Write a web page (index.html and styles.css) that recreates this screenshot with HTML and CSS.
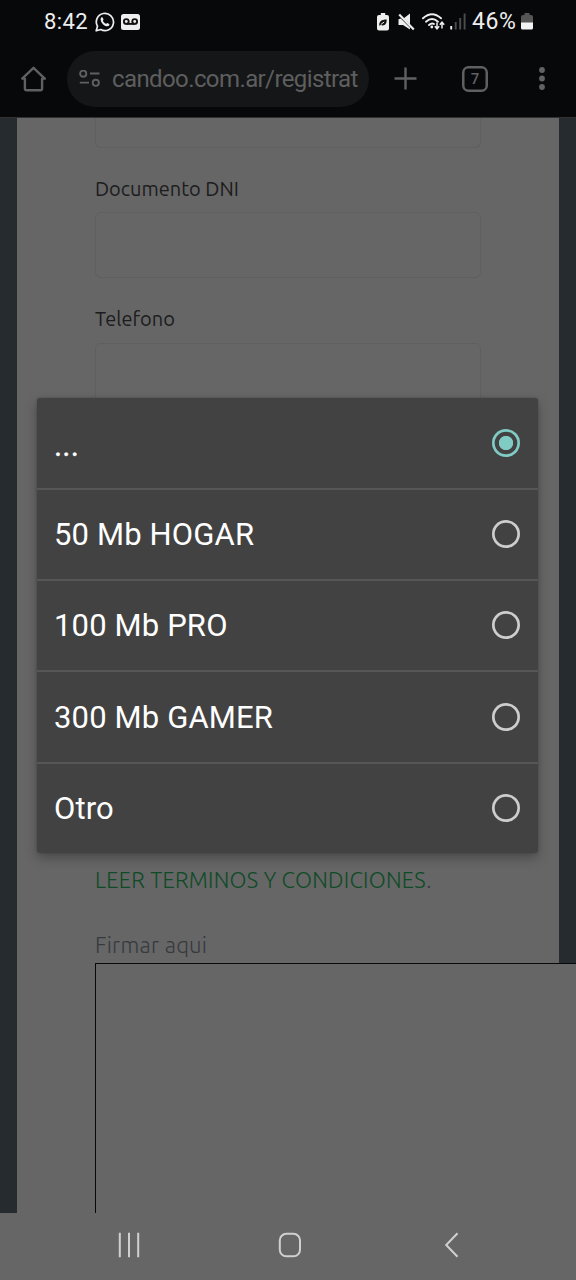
FILE: index.html
```html
<!DOCTYPE html>
<html lang="es">
<head>
<meta charset="utf-8">
<title>Registro</title>
<link rel="stylesheet" href="styles.css">
</head>
<body>
<div class="phone">
  <header class="chrome">
    <div class="status">
      <span class="clock">8:42</span>
      <svg class="whatsapp" width="20" height="20" viewBox="0 0 20 20"><path d="M1.2 18.8 2.5 14.3A8.6 8.6 0 1 1 5.8 17.5Z" fill="none" stroke="#eee" stroke-width="1.7" stroke-linejoin="round"/><path d="M6.2 5.600c.7-.7 1.300-.5 1.600.2l.7 1.600c.2.5-.7 1-.6 1.400.5 1.400 1.700 2.500 3 3 .5.200 1-1 1.500-.8l1.700.9c.6.300.3 1.400-.4 1.900-1.200.9-3.300.4-5.200-1.100C6.400 11 4.800 7.800 6.200 5.600Z" fill="#eee"/></svg>
      <svg class="voicemail" width="19" height="16" viewBox="0 0 19 16"><rect width="19" height="16" rx="2.500" fill="#eee"/><g fill="none" stroke="#111" stroke-width="1.900"><circle cx="5.300" cy="7.500" r="2.400"/><circle cx="13.700" cy="7.500" r="2.400"/><path d="M5.300 9.900H13.700"/></g></svg>
      <svg class="saver" width="12" height="18" viewBox="0 0 12 18"><path d="M3.800 0h4.400v2H10a2 2 0 0 1 2 2v11.500a2 2 0 0 1-2 2H2a2 2 0 0 1-2-2V4a2 2 0 0 1 2-2h1.800Z" fill="#eee"/><path d="M2.300 12.800C1.800 8.500 4.500 6.700 9.700 6.600c.1 4.300-1.900 7-6.100 5.500Z" fill="#111"/><path d="M3.800 11.500 7.200 9" stroke="#eee" stroke-width="1"/></svg>
      <svg class="mute" width="17" height="18" viewBox="0 0 17 18"><path d="M.5 6.200 2.800 5.500 12 14.800V16.500L5 12H.5ZM5.800 5.200 12 .5V11.200Z" fill="#eee"/><path d="M1.200 1.500 15.800 16.500" stroke="#eee" stroke-width="2.200"/></svg>
      <svg class="wifi" width="23" height="18" viewBox="0 0 23 18"><g fill="none" stroke="#eee" stroke-width="1.900" stroke-linecap="round"><path d="M1 5.300Q10 -2.800 19 5.300"/><path d="M4 8.700Q10 3.300 16 8.700"/><path d="M7 12Q9.800 9.500 12 11"/></g><circle cx="9.800" cy="14" r="1.400" fill="#eee"/><path d="M15 9.500V15.500M12.800 13.300l2.200 2.500 2.200-2.500M20 15.500V9.500M17.800 11.700 20 9.200l2.200 2.500" fill="none" stroke="#eee" stroke-width="1.500"/></svg>
      <svg class="signal" width="16" height="17" viewBox="0 0 16 17"><path d="M1.200 13v3.500" stroke="#eee" stroke-width="1.900"/><path d="M5.700 9v7.500M10.200 5v11.500M14.600.5v16" stroke="#4c4d4f" stroke-width="1.900"/></svg>
      <span class="percent">46%</span>
      <svg class="battery" width="12" height="17" viewBox="0 0 12 17"><path d="M3.500 0h5v2H10a2 2 0 0 1 2 2v6H0V4a2 2 0 0 1 2-2h1.500Z" fill="#555"/><path d="M0 9.500h12V15a1.500 1.500 0 0 1-1.500 1.500h-9A1.500 1.500 0 0 1 0 15Z" fill="#f2f2f2"/></svg>
    </div>
    <div class="toolbar">
      <svg class="home" width="26" height="26" viewBox="0 0 26 26"><path d="M2.200 12.600 13.500 1.800 24.800 12.600H22.100V22.500a1.800 1.800 0 0 1-1.800 1.800H6.700a1.800 1.800 0 0 1-1.800-1.800V12.600Z" fill="none" stroke="#606061" stroke-width="2.400" stroke-linejoin="round"/></svg>
      <div class="omnibox">
        <svg class="tune" width="21" height="18" viewBox="0 0 21 18"><g fill="none" stroke="#606061" stroke-width="1.900"><circle cx="4.200" cy="3.700" r="3.100"/><circle cx="16.800" cy="12.800" r="3.100"/><path d="M11 3.500h9.500M.8 12.600H10"/></g></svg>
        <span class="url">candoo.com.ar/registrat</span>
      </div>
      <svg class="plus" width="24" height="24" viewBox="0 0 24 24"><path d="M12.500 .5v22M1.500 11.500h22" stroke="#606061" stroke-width="2.400" fill="none"/></svg>
      <span class="tabs">7</span>
      <svg class="more" width="6" height="24" viewBox="0 0 6 24"><g fill="#626263"><circle cx="3" cy="3" r="2.900"/><circle cx="3" cy="11.500" r="2.900"/><circle cx="3" cy="20" r="2.900"/></g></svg>
    </div>
  </header>

  <main class="page">
    <div class="sheet">
      <div class="input cut"></div>
      <label class="label dni"><span>Documento DNI</span></label>
      <div class="input"></div>
      <label class="label tel"><span>Telefono</span></label>
      <div class="input"></div>
      <div class="links">
        <a class="terms"><span class="green">LEER TERMINOS Y CONDICIONES</span>.</a>
        <span class="sign">Firmar aqui</span>
      </div>
      <div class="canvas"></div>
    </div>
  </main>

  <nav class="nav">
    <svg width="22" height="26" viewBox="0 0 22 26"><path d="M1.800 .8v24.500M11 .8v24.500M20.200 .8v24.500" stroke="#d0d0d0" stroke-width="2"/></svg>
    <svg width="24" height="26" viewBox="0 0 24 26"><rect x="1.800" y="1.800" width="20.200" height="22.500" rx="6.500" fill="none" stroke="#d0d0d0" stroke-width="2"/></svg>
    <svg width="16" height="26" viewBox="0 0 16 26"><path d="M13.500 1.300 2.200 13 13.500 24.800" fill="none" stroke="#d0d0d0" stroke-width="2"/></svg>
  </nav>

  <div class="popup">
    <div class="option"><span class="dots">...</span><i class="radio on"></i></div>
    <div class="option"><span>50 Mb HOGAR</span><i class="radio"></i></div>
    <div class="option"><span>100 Mb PRO</span><i class="radio"></i></div>
    <div class="option"><span>300 Mb GAMER</span><i class="radio"></i></div>
    <div class="option"><span>Otro</span><i class="radio"></i></div>
  </div>
</div>
</body>
</html>
```
FILE: styles.css
```css
* { box-sizing: border-box; }
body { margin: 0; background: #666; }
svg { display: block; flex: none; }
.phone { position: relative; width: 576px; height: 1280px; overflow: hidden; display: flex; flex-direction: column; font-family: Roboto, "Liberation Sans", sans-serif; }

.chrome { height: 118px; flex: none; background: #07080a; border-bottom: 1px solid #303132; }
.status { height: 43px; padding-left: 44px; display: flex; align-items: center; color: #eee; font-size: 22px; white-space: nowrap; }
.clock { width: 51px; letter-spacing: .4px; }
.voicemail { margin-left: 6px; }
.saver { margin-left: 237px; }
.mute { margin-left: 9px; }
.wifi { margin-left: 7px; }
.signal { margin-left: 5px; }
.percent { margin-left: 6px; width: 49px; font-size: 23px; letter-spacing: .6px; }

.toolbar { height: 74px; display: flex; align-items: center; padding: 3px 30px 5px 20px; }
.omnibox { width: 302px; height: 56px; margin-left: 21px; border-radius: 28px; background: #151617; display: flex; align-items: center; padding: 0 8px 0 12px; flex: none; }
.url { margin-left: 12px; flex: 1; white-space: nowrap; color: #5e5e5f; font-size: 24px; line-height: 32px; letter-spacing: -.6px; }
.plus { margin-left: 24px; }
.tabs { margin-left: 45px; width: 26px; height: 26px; box-shadow: inset 0 0 0 2.500px #606061; border-radius: 6.500px; color: #606061; font-size: 15px; font-weight: 500; line-height: 26px; text-align: center; flex: none; }
.more { margin-left: 51px; }

.page { height: 1095px; flex: none; background: #262b30; padding: 0 17px; overflow: hidden; }
.sheet { background: #666; height: 100%; padding-left: 78px; color: #1c1c1d; font-family: Ubuntu, "Noto Sans", sans-serif; }
.input { width: 386px; height: 66px; border: 1px solid #5e5f60; border-radius: 6px; }
.input.cut { height: 30px; border-top: 0; border-radius: 0 0 6px 6px; }
.label { display: block; height: 64px; font-size: 20px; line-height: 28px; padding-top: 27px; white-space: nowrap; }
.tel { height: 65px; }
.links { display: flex; flex-direction: column; height: 554px; padding-top: 456px; white-space: nowrap; font-family: Ubuntu, "Open Sans", sans-serif; font-weight: 300; font-size: 22px; line-height: 30px; letter-spacing: .26px; }
.green { color: #0e4b26; }
.terms, .sign { color: #363a3e; }
.sign { margin-top: 35px; }
.canvas { width: 600px; height: 400px; border: 1px solid #08090a; background: #666; }

.nav { flex: 1; display: flex; align-items: flex-start; padding: 19px 0 0 118px; background: #666; }
.nav svg:nth-child(2) { margin-left: 138px; }
.nav svg:nth-child(3) { margin-left: 142px; }

.popup { position: absolute; left: 37px; top: 398px; width: 501px; height: 455px; border-radius: 3px; background: #424242; box-shadow: 0 5px 12px rgba(0,0,0,.28), 0 0 3px rgba(0,0,0,.2); display: grid; grid-template-rows: 92px 91px 91px 92px 89px; }
.option { display: flex; align-items: center; justify-content: space-between; padding: 0 18px 1px 17px; color: #fff; font-size: 31px; letter-spacing: .15px; white-space: nowrap; border-bottom: 2px solid #565656; }
.option:first-child { padding-bottom: 0; }
.option span { padding-top: 1px; }
.option .dots { padding-top: 5px; -webkit-text-stroke: .3px #fff; }
.option:last-child { border: 0; }
.radio { width: 28px; height: 28px; box-shadow: inset 0 0 0 2.700px #cdcdcd; border-radius: 50%; flex: none; }
.radio.on { box-shadow: inset 0 0 0 2.700px #80cbc4; background: radial-gradient(circle, #80cbc4 6.800px, transparent 7.500px); }
```
